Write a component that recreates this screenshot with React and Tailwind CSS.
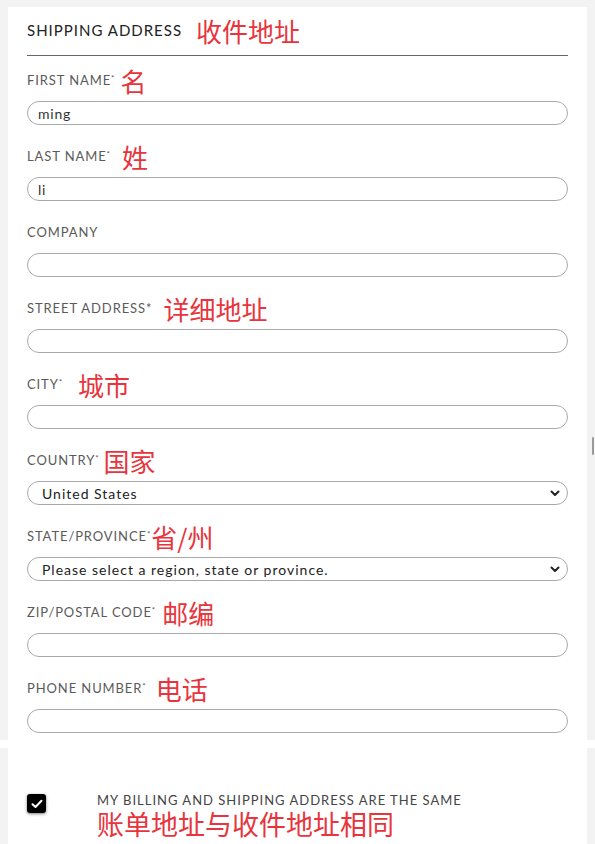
import React from 'react';

const ChevronDown = () => (
    <svg width="12" height="12" viewBox="0 0 12 12" fill="none">
        <path d="M2.5 4.5L6 8l3.5-3.5" stroke="#222" strokeWidth="2" strokeLinecap="round" strokeLinejoin="round" />
    </svg>
);

const fields = [
    { label: 'FIRST NAME', star: 'sup', zh: '名', gap: 'ml-[5px]', value: 'ming' },
    { label: 'LAST NAME', star: 'sup', zh: '姓', gap: 'ml-[11px]', value: 'li' },
    { label: 'COMPANY', star: null, zh: '', gap: 'ml-3', value: '' },
    { label: 'STREET ADDRESS', star: 'plain', zh: '详细地址', gap: 'ml-[11px]', value: '' },
    { label: 'CITY', star: 'sup', zh: '城市', gap: 'ml-[15px]', value: '' },
    { label: 'COUNTRY', star: 'sup', zh: '国家', gap: 'ml-[4px]', value: 'United States', select: true },
    { label: 'STATE/PROVINCE', star: 'sup', zh: '省/州', gap: 'ml-0', value: 'Please select a region, state or province.', select: true },
    { label: 'ZIP/POSTAL CODE', star: 'sup', zh: '邮编', gap: 'ml-[6px]', value: '' },
    { label: 'PHONE NUMBER', star: 'sup', zh: '电话', gap: 'ml-[9px]', value: '' },
];

const zhFont = { fontFamily: '"Noto Sans CJK SC", sans-serif' };

const Field = ({ f }) => (
    <div className="flex flex-col">
        <div className="flex items-center h-[26px]">
            <span className="text-[13px] text-[#5a5a5a] tracking-[0.9px]">
                {f.label}
                {f.star === 'sup' && <sup className="text-[8px]">*</sup>}
                {f.star === 'plain' && '*'}
            </span>
            {f.zh && (
                <span className={`${f.gap} text-[26px] leading-none text-[#e8343c]`} style={zhFont}>
                    {f.zh}
                </span>
            )}
        </div>
        {f.select ? (
            <div className="mt-[7px] h-6 rounded-full border border-[#a9a9a9] flex items-center justify-between pl-[14px] pr-[6px]">
                <span className="text-[14px] text-[#222] tracking-[1px]">{f.value}</span>
                <ChevronDown />
            </div>
        ) : (
            <div className="mt-[7px] h-6 rounded-full border border-[#a9a9a9] flex items-center pl-[10px]">
                <span className="text-[14px] text-[#333] tracking-[0.8px]">{f.value}</span>
            </div>
        )}
    </div>
);

const App = () => {
    return (
        <div className="relative min-h-screen bg-[#f3f3f3] overflow-hidden" style={{ fontFamily: 'Lato, "Noto Sans", sans-serif' }}>
            <div className="h-[7px]"></div>
            <div className="mx-2 bg-white px-[19px] pt-[10px] pb-[7px]">
                <div className="flex items-center h-[27px]">
                    <span className="text-[15px] text-[#222] tracking-[1px]">SHIPPING ADDRESS</span>
                    <span className="ml-[14px] text-[26px] leading-none text-[#e8343c]" style={zhFont}>收件地址</span>
                </div>
                <div className="mt-[11px] border-b border-[#666]"></div>
                <div className="mt-3 flex flex-col gap-[19px]">
                    {fields.map((f) => (
                        <Field key={f.label} f={f} />
                    ))}
                </div>
            </div>
            <div className="h-2 bg-white"></div>
            <div className="mx-2 bg-white px-[19px] pt-[45px] pb-6 min-h-[100px]">
                <div className="flex items-start">
                    <div className="mt-[1px] w-[19px] h-[19px] rounded-[3px] bg-black shadow-[0_1px_3px_rgba(0,0,0,0.5)] flex items-center justify-center">
                        <svg width="12" height="10" viewBox="0 0 12 10" fill="none">
                            <path d="M1.5 5.2L4.5 8 10.5 1.8" stroke="#fff" strokeWidth="2" strokeLinecap="round" strokeLinejoin="round" />
                        </svg>
                    </div>
                    <div className="ml-[51px] flex flex-col">
                        <span className="text-[13px] text-[#444] tracking-[1px] leading-[14px]">
                            MY BILLING AND SHIPPING ADDRESS ARE THE SAME
                        </span>
                        <span className="mt-[3px] text-[27px] leading-[28px] text-[#e8343c]" style={zhFont}>
                            账单地址与收件地址相同
                        </span>
                    </div>
                </div>
            </div>
            <div className="absolute right-[1px] top-[437px] w-[2px] h-[18px] bg-[#9a9a9a] rounded"></div>
        </div>
    );
};

export default App;
